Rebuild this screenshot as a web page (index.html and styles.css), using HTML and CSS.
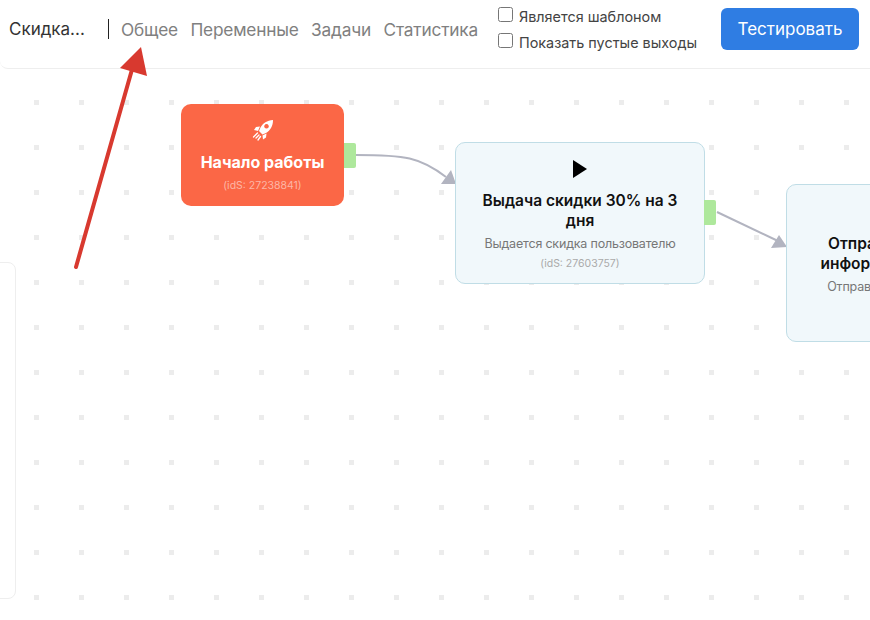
FILE: index.html
```html
<!DOCTYPE html>
<html lang="ru">
<head>
    <meta charset="UTF-8">
    <title>Скидка</title>
    <link rel="stylesheet" href="styles.css">
</head>
<body>
    <header class="topbar">
        <div class="scenario-name">Скидка...</div>
        <nav class="tabs">
            <a>Общее</a>
            <a>Переменные</a>
            <a>Задачи</a>
            <a>Статистика</a>
        </nav>
        <div class="options">
            <label class="option"><input type="checkbox">Является шаблоном</label>
            <label class="option"><input type="checkbox">Показать пустые выходы</label>
        </div>
        <button class="test-btn">Тестировать</button>
    </header>

    <main class="canvas">
        <div class="side-panel"></div>

        <svg class="edges" width="870" height="620" viewBox="0 0 870 620">
            <path class="edge" d="M356 155 C 405 155 420 157 446 177"/>
            <polygon class="edge-head" points="456,184 441,184 451,170"/>
            <path class="edge" d="M717 212 L778 241"/>
            <polygon class="edge-head" points="787,247 771,248 779,235"/>
        </svg>

        <div class="node node-start">
            <svg class="node-icon" width="24" height="24" viewBox="0 0 24 24">
                <path d="M22 2 C16 2.500 12 5 9.500 9.500 L8 13 L11.500 16.500 L15 15 C19.500 12.500 22 8 22 2 Z M15.500 6 a2.300 2.300 0 1 0 .01 0 Z" fill="#fff" fill-rule="evenodd"/>
                <path d="M9 8.500 L5 9 L3 12 L7 13 Z M15.500 15.500 L15 19.500 L12 21.500 L11.500 17.500 Z" fill="#fff"/>
                <path d="M6.500 15 L2.500 19 M8 17 L5 20 M9.500 18.500 L7 22" stroke="#fff" stroke-width="1.300" stroke-linecap="round"/>
            </svg>
            <div class="node-title">Начало работы</div>
            <div class="node-id">(idS: 27238841)</div>
            <span class="handle"></span>
        </div>

        <div class="node node-action node-discount">
            <svg class="node-icon" width="16" height="20" viewBox="0 0 16 20">
                <polygon points="1,1 15,10 1,19" fill="#000"/>
            </svg>
            <div class="node-title">Выдача скидки 30% на 3 дня</div>
            <div class="node-desc">Выдается скидка пользователю</div>
            <div class="node-id">(idS: 27603757)</div>
            <span class="handle"></span>
        </div>

        <div class="node node-action node-send">
            <div class="node-title">Отправка сообщения информации о скидках</div>
            <div class="node-desc">Отправляется уведомление</div>
        </div>

        <svg class="annotation" width="870" height="620" viewBox="0 0 870 620">
            <path d="M76 267 L133 66" stroke="#d8392f" stroke-width="4" stroke-linecap="round"/>
            <polygon points="141,47 120,68 147,76" fill="#d8392f"/>
        </svg>
    </main>
</body>
</html>
```

FILE: styles.css
```css
* {
    box-sizing: border-box;
}
html, body {
    margin: 0;
    height: 100%;
    overflow: hidden;
}
body {
    font-family: Inter, "Noto Sans", sans-serif;
    background-color: #fff;
    color: #333;
}
.topbar {
    display: flex;
    align-items: center;
    height: 69px;
    padding: 0 11px 10px 9px;
    border-bottom: 1px solid #eeeeee;
    border-bottom-left-radius: 8px;
}
.scenario-name {
    width: 99px;
    font-size: 17px;
    color: #333;
}
.tabs {
    display: flex;
    gap: 12.500px;
    height: 20px;
    padding-left: 12px;
    border-left: 1px solid #222;
    align-items: center;
    font-size: 17.300px;
    letter-spacing: -0.2px;
    color: #808080;
}
.options {
    display: flex;
    flex-direction: column;
    gap: 6px;
    margin-left: 20.500px;
    font-size: 14.400px;
    color: #444;
}
.option {
    display: flex;
    align-items: center;
    gap: 5.500px;
    height: 20px;
}
.option input {
    width: 15px;
    height: 15px;
    margin: -4px 0 0;
}
.test-btn {
    width: 138px;
    height: 42px;
    margin-left: auto;
    border: none;
    border-radius: 6px;
    background-color: #2f7de3;
    color: #fff;
    font-family: inherit;
    font-size: 17px;
}
.canvas {
    position: relative;
    height: 551px;
    background-image: conic-gradient(from 270deg at 5px 5px, #ececec 25%, transparent 0);
    background-size: 45px 45px;
    background-position: 34px 31px;
}
.side-panel {
    position: absolute;
    left: -10px;
    top: 193px;
    width: 26px;
    height: 337px;
    background-color: #fff;
    border: 1px solid #eeeeee;
    border-radius: 8px;
}
.edges, .annotation {
    position: absolute;
    left: 0;
    top: -69px;
}
.annotation {
    z-index: 5;
}
.edge {
    fill: none;
    stroke: #b2b4c0;
    stroke-width: 2;
}
.edge-head {
    fill: #b2b4c0;
}
.node {
    position: absolute;
    display: flex;
    flex-direction: column;
    align-items: center;
    text-align: center;
}
.node-start {
    left: 181px;
    top: 35px;
    width: 163px;
    height: 102px;
    padding-top: 14px;
    border-radius: 10px;
    background-color: #fb6746;
    color: #fff;
}
.node-start .node-title {
    margin-top: 10px;
    color: #fff;
    font-size: 16px;
    font-weight: 700;
    line-height: 20px;
}
.node-start .node-id {
    margin-top: 7px;
    color: #fdb6a5;
}
.node-action {
    padding: 16px 20px 0;
    border: 1px solid #c0dde6;
    border-radius: 10px;
    background-color: #f1f8fb;
}
.node-discount {
    left: 455px;
    top: 73px;
    width: 250px;
    height: 142px;
}
.node-send {
    left: 786px;
    top: 115px;
    width: 250px;
    height: 158px;
    padding-top: 49px;
}
.node-title {
    margin-top: 12px;
    color: #111;
    font-size: 15.500px;
    font-weight: 600;
    line-height: 20px;
}
.node-send .node-title {
    margin-top: 0;
}
.node-desc {
    margin-top: 5px;
    color: #777;
    font-size: 12.500px;
    line-height: 16px;
    letter-spacing: -0.2px;
}
.node-id {
    margin-top: 5px;
    color: #aaa;
    font-size: 10.500px;
    line-height: 14px;
}
.handle {
    position: absolute;
    left: 100%;
    width: 12px;
    height: 25px;
    background-color: #aee89c;
    border-radius: 0 2px 2px 0;
}
.node-start .handle {
    top: 39px;
}
.node-discount .handle {
    top: 57px;
}
```
